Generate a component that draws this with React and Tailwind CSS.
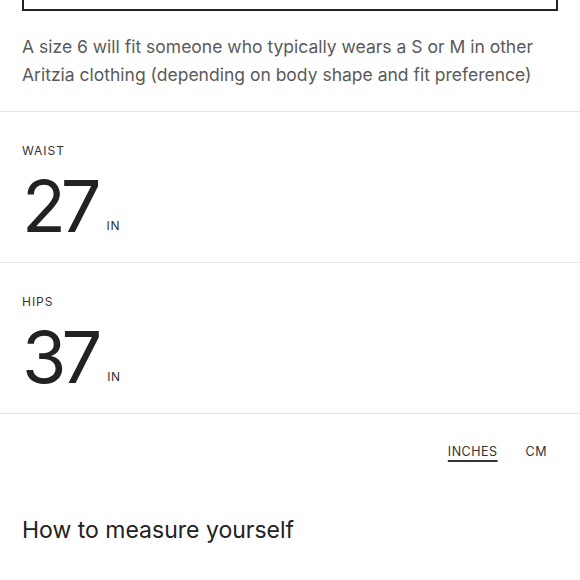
import React from "react";

const Measurement = ({ label, value }) => (
    <div className="border-b border-[#e4e4e4] px-[22px] h-[151px] flex flex-col">
        <div className="pt-[32px] text-[12px] leading-[14px] tracking-[0.08em] text-[#333]">{label}</div>
        <div className="flex items-end mt-[16px]">
            <span className="text-[72px] leading-[64px] text-[#222] tracking-[-0.07em]">{value}</span>
            <span className="ml-[10px] text-[12px] leading-[12px] tracking-[0.06em] text-[#333] mb-[6px]">IN</span>
        </div>
    </div>
);

export default function App() {
    return (
        <div className="w-[580px] h-[580px] overflow-hidden bg-white" style={{ fontFamily: "Inter, 'Noto Sans', sans-serif" }}>
            <div className="px-[22px]">
                <div className="h-[40px] -mt-[29px] border-2 border-[#222]" />
                <p className="mt-[22px] text-[17.5px] leading-[28px] text-[#5a5a5a]">
                    A size 6 will fit someone who typically wears a S or M in other Aritzia clothing (depending on body shape and fit preference)
                </p>
            </div>
            <div className="mt-[22px] border-t border-[#e4e4e4]">
                <Measurement label="WAIST" value="27" />
                <Measurement label="HIPS" value="37" />
            </div>
            <div className="flex justify-end gap-[28px] pr-[33px] pt-[29px] text-[12.5px] tracking-[0.04em] text-[#333]">
                <button className="underline underline-offset-[4px] decoration-[1.5px]">INCHES</button>
                <button>CM</button>
            </div>
            <h2 className="px-[22px] mt-[52px] text-[23px] leading-[32px] text-[#222]">How to measure yourself</h2>
        </div>
    );
}
